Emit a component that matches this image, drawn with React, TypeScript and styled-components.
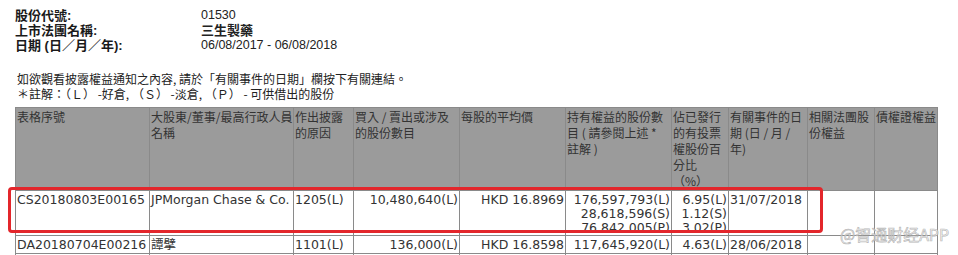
import React from "react";
import styled, { createGlobalStyle } from "styled-components";

const Global = createGlobalStyle`
  html, body { margin: 0; padding: 0; background: #fff; }
  body { font-family: "Liberation Sans", "Noto Sans CJK TC", sans-serif; color: #222; }
`;

const Page = styled.div`
  position: relative;
  width: 958px;
  height: 255px;
  overflow: hidden;
  box-sizing: border-box;
  padding: 8px 0 0 15px;
`;

const Info = styled.div`
  display: grid;
  grid-template-columns: 186px auto;
  grid-auto-rows: 15px;
  line-height: 15px;
  font-size: 13px;
`;

const Label = styled.div`
  font-family: "Liberation Sans", "Noto Sans CJK TC", sans-serif;
  font-weight: bold;
  color: #1a1a1a;
  white-space: nowrap;
`;

const Value = styled.div<{ $cjk?: boolean }>`
  font-family: "Liberation Sans", "Noto Sans CJK TC", sans-serif;
  font-size: ${(p) => (p.$cjk ? "13px" : "12.5px")};
  font-weight: ${(p) => (p.$cjk ? "bold" : "normal")};
  color: #222;
  white-space: nowrap;
`;

const Note = styled.p<{ $first?: boolean }>`
  margin: ${(p) => (p.$first ? "18px 0 0" : "0")};
  font-family: "Noto Sans CJK TC", sans-serif;
  font-size: 12px;
  line-height: 15px;
  height: 15px;
  color: #222;
  white-space: nowrap;
  padding-left: 2px;
`;

const TableWrap = styled.div`
  position: relative;
  margin-top: 6px;
  width: 923px;
`;

const Grid = styled.div`
  display: grid;
  grid-template-columns: 133px 143px 59px 105px 105px 105px 56px 78px 66px 62px;
  grid-template-rows: 82px 44px 17px 20px;
  gap: 1px;
  padding: 1px;
  background: #8a8a8a;
  width: 923px;
  box-sizing: border-box;
`;

const HeadCell = styled.div`
  background: #9b9b9b;
  color: #333;
  font-family: "Noto Sans CJK TC", sans-serif;
  font-size: 12px;
  line-height: 16px;
  padding: 1px 1px 0;
  white-space: nowrap;
  overflow: hidden;
`;

const Cell = styled.div<{ $align?: "left" | "right" }>`
  background: #fff;
  color: #333;
  font-family: "DejaVu Sans", "Noto Sans CJK TC", sans-serif;
  font-size: 12.5px;
  line-height: 14px;
  padding: 2px 1px 0;
  text-align: ${(p) => p.$align ?? "left"};
  white-space: nowrap;
  overflow: visible;
`;

const Highlight = styled.div`
  position: absolute;
  left: -7px;
  top: 80px;
  width: 815px;
  height: 46px;
  box-sizing: border-box;
  border: 3px solid #e3262b;
  border-radius: 4px;
  pointer-events: none;
`;

const Watermark = styled.div`
  position: absolute;
  left: 840px;
  top: 225px;
  font-family: "Noto Sans CJK SC", sans-serif;
  font-size: 16px;
  line-height: 18px;
  color: rgba(255, 255, 255, 0.7);
  -webkit-text-stroke: 0.7px rgba(170, 170, 170, 0.85);
  white-space: nowrap;
`;

const headers: React.ReactNode[] = [
  <>表格序號</>,
  <>大股東/董事/最高行政人員<br />名稱</>,
  <>作出披露<br />的原因</>,
  <>買入 / 賣出或涉及<br />的股份數目</>,
  <>每股的平均價</>,
  <>持有權益的股份數<br />目 ( 請參閱上述 *<br />註解 )</>,
  <>佔已發行<br />的有投票<br />權股份百<br />分比<br />（%）</>,
  <>有關事件的日<br />期 (日 / 月 /<br />年)</>,
  <>相關法團股<br />份權益</>,
  <>債權證權益</>,
];

const aligns: ("left" | "right")[] = [
  "left", "left", "left", "right", "right", "right", "right", "left", "left", "left",
];

const rows: React.ReactNode[][] = [
  [
    "CS20180803E00165",
    "JPMorgan Chase & Co.",
    "1205(L)",
    "10,480,640(L)",
    "HKD 16.8969",
    <>176,597,793(L)<br />28,618,596(S)<br />76,842,005(P)</>,
    <>6.95(L)<br />1.12(S)<br />3.02(P)</>,
    "31/07/2018",
    "",
    "",
  ],
  [
    "DA20180704E00216",
    "譚擘",
    "1101(L)",
    "136,000(L)",
    "HKD 16.8598",
    "117,645,920(L)",
    "4.63(L)",
    "28/06/2018",
    "",
    "",
  ],
  ["", "", "", "", "", "", "", "", "", ""],
];

export default function App() {
  return (
    <>
      <Global />
      <Page>
        <Info>
          <Label>股份代號:</Label>
          <Value>01530</Value>
          <Label>上市法團名稱:</Label>
          <Value $cjk>三生製藥</Value>
          <Label>日期 (日／月／年):</Label>
          <Value>06/08/2017 - 06/08/2018</Value>
        </Info>
        <Note $first>如欲觀看披露權益通知之內容, 請於「有關事件的日期」欄按下有關連結。</Note>
        <Note>＊註解：（Ｌ） -好倉, （Ｓ） -淡倉, （Ｐ） - 可供借出的股份</Note>
        <TableWrap>
          <Grid>
            {headers.map((h, i) => (
              <HeadCell key={`h${i}`}>{h}</HeadCell>
            ))}
            {rows.map((r, ri) =>
              r.map((c, ci) => (
                <Cell key={`c${ri}-${ci}`} $align={aligns[ci]}>
                  {c}
                </Cell>
              ))
            )}
          </Grid>
          <Highlight />
        </TableWrap>
        <Watermark>@智通财经APP</Watermark>
      </Page>
    </>
  );
}
